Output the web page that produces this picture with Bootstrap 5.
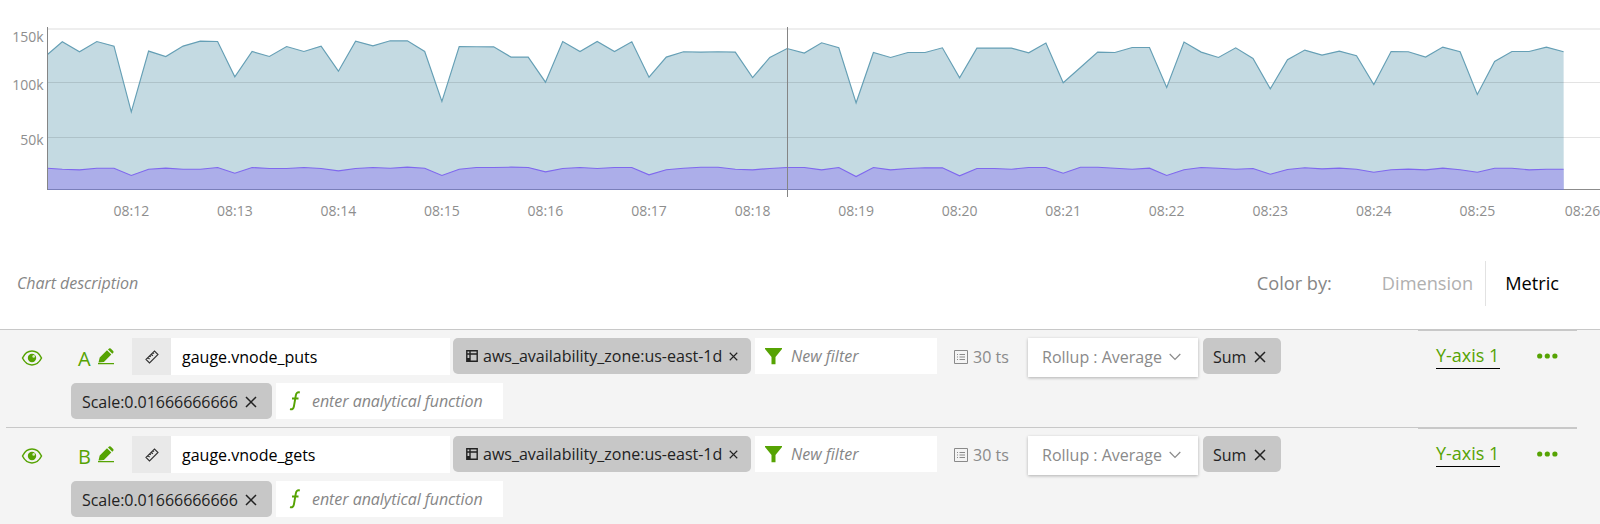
<!DOCTYPE html>
<html lang="en">
<head>
<meta charset="utf-8">
<meta name="viewport" content="width=device-width, initial-scale=1">
<title>Chart editor</title>
<link href="https://cdn.jsdelivr.net/npm/bootstrap@5.3.0/dist/css/bootstrap.min.css" rel="stylesheet">
<style>
  body { font-family: "Open Sans", sans-serif; font-size: 16px; line-height: 24px; color: #000; overflow: hidden; height: 524px; }
  svg { display: block; flex: none; }
  .plot text { font-size: 14px; fill: #8e8e8e; }
  .chart-tools { height: 89px; color: #868686; padding: 21px 41px 24px 17px; }
  .chart-tools em { letter-spacing: -.05px; }
  .colorby { font-size: 18.2px; }
  .colorby .off { color: #b0b0b0; }
  .colorby .on { color: #000; border-left: 1px solid #e2e2e2; height: 45px; margin-left: 12px; padding-left: 19px; }
  .signals { background: #f4f4f4; border-top: 1px solid #c8c8c8; height: 195px; }
  .signal { height: 98px; padding: 8px 0 0; }
  .rule-line { height: 1px; margin-top: -9px; margin-bottom: 8px; margin-left: 6px; width: 1571px; }
  .signal + .signal .rule-line { background: #c8c8c8; }
  .rule-line i { display: block; margin-left: auto; width: 159px; height: 2px; background: #c8c8c8; }
  .line-one { height: 37px; }
  .line-two { margin: 8px 0 0 71px; height: 36px; }
  .green { color: #56a303; }
  .eye-col { width: 59px; margin-left: 21px; }
  .letter { font-size: 20px; width: 18px; }
  .kind { width: 39px; height: 37px; background: #e9e9e9; color: #333; }
  .metric { width: 279px; height: 37px; background: #fff; padding-left: 11px; }
  .chip { background: #c7c7c7; color: #222; border-radius: 5px; height: 36px; }
  .ghost { background: #fff; color: #868686; font-style: italic; height: 36px; }
  .rollup { background: #fff; color: #8a8a8a; width: 170px; height: 39px; padding: 0 17px 2px 14px; box-shadow: 0 1px 3px rgba(0,0,0,.28); }
  .axis { font-size: 18px; line-height: 26px; height: 31px; padding-top: 4px; border-bottom: 1px solid #000; width: 64px; }
</style>
</head>
<body class="bg-white">
<svg width="0" height="0" class="position-absolute" aria-hidden="true">
  <symbol id="eye" viewBox="0 0 22 18"><path d="M1.5 9C6-.2 16-.2 20.500 9C16 18.200 6 18.200 1.500 9Z" fill="none" stroke="currentColor" stroke-width="1.500"/><circle cx="11" cy="9" r="4.200" fill="currentColor"/><circle cx="12.700" cy="7.400" r="1.300" fill="#d5e8c4"/></symbol>
  <symbol id="pencil" viewBox="0 0 17 17"><path d="M.5 14.500L1.700 9.600L9 2.300L13.300 6.600L5.900 14ZM10 1.400L11.100.4Q11.900-.1 12.700.6L15.200 3.100Q15.900 3.900 15.300 4.700L14.300 5.700ZM0 14.900H16V16.300H0Z" fill="currentColor"/></symbol>
  <symbol id="ruler" viewBox="0 0 14 14"><path d="M1 9.500L9.500 1L13 4.500L4.500 13ZM3 7.500L4.600 9.100M4.700 5.800L5.800 6.900M6.300 4.200L7.900 5.800M7.900 2.600L9 3.700" fill="none" stroke="currentColor" stroke-width="1.100"/></symbol>
  <symbol id="panel" viewBox="0 0 12 12"><path d="M.8.800H11.200V11.200H.8ZM.8 4H11.200M4 .800V11.200" fill="none" stroke="currentColor" stroke-width="1.400"/><path d="M1 8H4V11H1Z" fill="currentColor"/></symbol>
  <symbol id="cross" viewBox="0 0 12 12"><path d="M1 1L11 11M11 1L1 11" fill="none" stroke="currentColor" stroke-width="1.500"/></symbol>
  <symbol id="funnel" viewBox="0 0 17 17"><path d="M0 0H17V1L10.500 9V16.300H6.500V9L0 1Z" fill="currentColor"/></symbol>
  <symbol id="list" viewBox="0 0 14 14"><path d="M.5.500H13.500V13.500H.5ZM3 4.500H4M5.500 4.500H11M3 7H4M5.500 7H11M3 9.500H4M5.500 9.500H11" fill="none" stroke="currentColor"/></symbol>
  <symbol id="chevron" viewBox="0 0 12 8"><path d="M.7 1L6 6.500L11.300 1" fill="none" stroke="currentColor" stroke-width="1.200"/></symbol>
  <symbol id="dots" viewBox="0 0 21 6"><g fill="currentColor"><circle cx="2.700" cy="3" r="2.600"/><circle cx="10.300" cy="3" r="2.600"/><circle cx="17.900" cy="3" r="2.600"/></g></symbol>
  <symbol id="func" viewBox="0 0 12 20"><path d="M10.800 1.500Q7.500.3 6.800 4.500L4.900 15.500Q4.300 19 1 18.100M3 7.500H9.500" fill="none" stroke="currentColor" stroke-width="1.900"/></symbol>
</svg>

<svg class="plot" id="plot" width="1600" height="240" viewBox="0 0 1600 240"></svg>

<div class="chart-tools d-flex justify-content-between align-items-center">
  <em id="desc">Chart description</em>
  <div class="colorby d-flex align-items-center">
    <span style="margin-right:50px">Color by:</span>
    <span class="off">Dimension</span>
    <span class="on d-flex align-items-center">Metric</span>
  </div>
</div>

<div class="signals" id="signals"></div>

<script src="https://cdn.jsdelivr.net/npm/bootstrap@5.3.0/dist/js/bootstrap.bundle.min.js"></script>
<script>
  // Samples every ten seconds, in thirds of a pixel from the top of the plot.
  const puts = [163,125,155,124,138,335,153,169,138,123,124,230,154,169,139,154,138,213,123,137,122,122,154,304,139,140,140,171,171,246,124,154,124,154,125,231,171,155,156,155,156,232,172,145,159,128,143,308,157,172,157,157,143,233,144,144,144,158,129,248,202,156,157,142,142,262,126,156,172,143,175,266,179,150,165,153,167,253,154,155,171,141,155,283,184,154,154,141,155];
  const gets = [504,507,509,504,504,526,507,504,507,507,502,519,502,505,505,502,505,512,505,502,504,501,504,526,507,502,502,501,502,515,505,502,505,502,502,524,509,504,501,501,507,509,505,502,502,509,502,529,502,509,505,503,503,527,505,505,507,502,502,519,501,501,504,507,504,526,509,502,504,507,505,522,508,503,506,504,507,516,509,507,509,504,509,516,504,504,509,507,507];
  const line = a => a.map((v, i) => (i ? 131.3 + (i - 5) * 17.257 : 47.5).toFixed(1) + ',' + (v / 3 + .15).toFixed(1)).join(' L');
  const area = a => 'M' + line(a) + ' L1563.7,189.7 L47.5,189.7Z';
  let s = `<path d="${area(puts)}" fill="#c4dae2"/>
    <path d="M48 29H1600" stroke="#eee" stroke-width="2"/>
    <path d="M48 82.500H1600M48 137.500H1600" stroke="#000" stroke-opacity=".11"/>
    <path d="${area(gets)}" fill="#acaee9"/>
    <path d="M${line(puts)}" fill="none" stroke="#659fb5" stroke-width="1.150"/>
    <path d="M${line(gets)}" fill="none" stroke="#7f68ee" stroke-width="1.150"/>
    <path d="M47 189.500H1600" stroke="#8c8c8c"/><path d="M47 189.500H1564" stroke="#7a7fba"/>
    <path d="M47.500 27V190M787.500 27V197" stroke="#858585"/>
    <g text-anchor="end"><text x="43.500" y="42">150k</text><text x="43.500" y="90">100k</text><text x="43.500" y="144.500">50k</text></g>`;
  for (let m = 12; m <= 26; m++)
    s += `<text x="${m < 26 ? 131.3 + (m - 12) * 103.54 : 1582.5}" y="216" text-anchor="middle">08:${m}</text>`;
  document.getElementById('plot').innerHTML = s;

  const icon = (n, w, h, st = '') => `<svg width="${w}" height="${h}" style="${st}"><use href="#${n}"/></svg>`;
  document.getElementById('signals').innerHTML = [['A', 'gauge.vnode_puts'], ['B', 'gauge.vnode_gets']].map(([l, m]) => `
  <section class="signal">
    <div class="rule-line"><i></i></div>
    <div class="line-one d-flex">
      <div class="eye-col green d-flex align-items-center">${icon('eye', 22, 18, 'margin-top:2px')}</div>
      <div class="green d-flex align-items-center me-3" style="width:38px;margin-left:-2px"><span class="letter pt-1">${l}</span>${icon('pencil', 17, 17, 'margin-left:2px')}</div>
      <div class="kind d-flex align-items-center justify-content-center">${icon('ruler', 14, 14)}</div>
      <div class="metric d-flex align-items-center"><span>${m}</span></div>
      <div class="chip d-flex align-items-center" style="width:298px;margin-left:3px;padding-left:13px">${icon('panel', 12, 12)}<span style="margin:0 7px 0 5px">aws_availability_zone:us-east-1d</span>${icon('cross', 9, 9)}</div>
      <div class="ghost d-flex align-items-center" style="width:182px;margin-left:4px;padding-left:10px"><span class="green">${icon('funnel', 17, 17)}</span><span style="margin-left:9px">New filter</span></div>
      <div class="d-flex align-items-center" style="width:74px;margin-left:17px;color:#8a8a8a">${icon('list', 14, 14)}<span style="margin-left:5px">30 ts</span></div>
      <div class="rollup d-flex align-items-center justify-content-between"><span>Rollup : Average</span>${icon('chevron', 12, 8)}</div>
      <div class="chip d-flex align-items-center" style="width:78px;margin-left:5px;padding-left:10px;padding-top:1px"><span>Sum</span>${icon('cross', 12, 12, 'margin-left:8px')}</div>
      <div class="axis green text-nowrap" style="margin-left:155px">Y-axis 1</div>
      <div class="green" style="margin:15px 0 0 37px">${icon('dots', 21, 6)}</div>
    </div>
    <div class="line-two d-flex">
      <div class="chip d-flex align-items-center" style="width:201px;padding-left:11px;padding-top:1px"><span style="letter-spacing:-.04px">Scale:0.01666666666</span>${icon('cross', 12, 12, 'margin-left:7px')}</div>
      <div class="ghost d-flex align-items-center" style="width:227px;margin-left:4px;padding-left:13px"><span class="green">${icon('func', 12, 20)}</span><span style="margin-left:11px;letter-spacing:-.04px">enter analytical function</span></div>
    </div>
  </section>`).join('');
</script>
</body>
</html>
